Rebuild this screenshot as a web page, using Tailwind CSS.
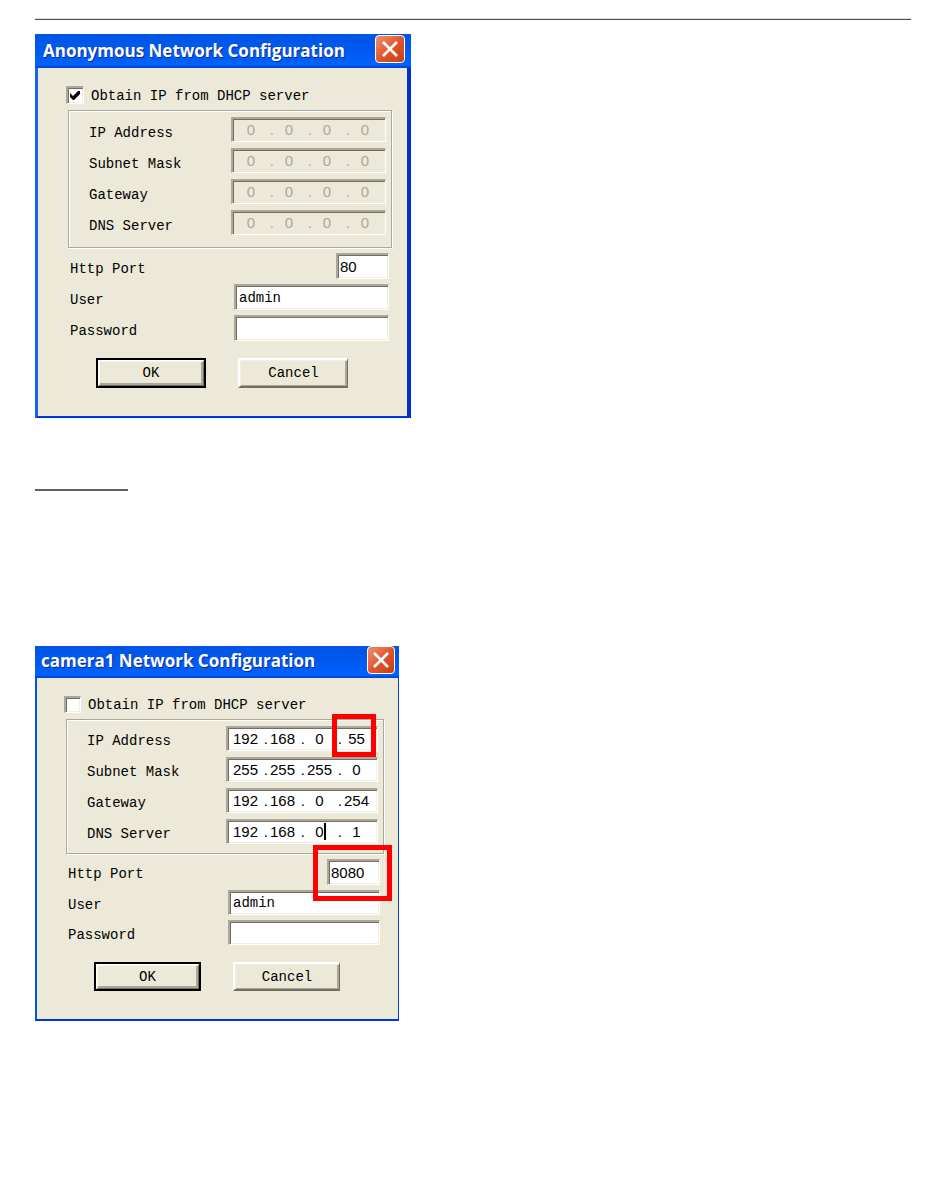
<!DOCTYPE html>
<html lang="en">

<head>
    <meta charset="UTF-8">
    <meta name="viewport" content="width=device-width, initial-scale=1.0">
    <title>Network Configuration</title>
    <script src="https://cdn.jsdelivr.net/npm/@tailwindcss/browser@4"></script>
</head>

<body class="min-h-screen bg-white text-black">
    <main class="px-[35px] pt-[18px] pb-40 font-['Liberation_Mono',monospace] text-sm leading-4">
        <hr class="mr-1 mb-3.5 h-0.5 border-t border-b border-t-[#dcdcdc] border-b-[#505050]">

        <!-- DHCP dialog -->
        <form class="w-[376px] border-r-4 border-b-2 border-l-3 border-r-[#0030c8] border-b-[#0038d8] border-l-[#1464f0] bg-[#ece9d8]">
            <div class="-mr-1 -ml-[3px] flex h-[34px] items-center justify-between bg-linear-to-b from-[#0054e3] via-[#0058ee] via-40% to-[#0064ff] pr-1.5 pl-2 shadow-[inset_0_-2px_0_#0048d8]">
                <h2 class="font-['Open_Sans',sans-serif] text-[17px] font-bold text-white [text-shadow:1px_1px_0_#0a2a9a]">Anonymous Network Configuration</h2>
                <button type="button" aria-label="Close" class="mb-1 flex h-7 w-[30px] items-center justify-center rounded border border-white bg-linear-to-br from-[#ec9070] via-[#e2562e] to-[#c83c10]">
                    <svg class="h-4 w-4" viewBox="0 0 16 16" fill="none" stroke="#fff" stroke-width="2.6"><path d="M1 1L15 15M15 1L1 15" /></svg>
                </button>
            </div>

            <div class="pt-[18px] pr-[15px] pb-7 pl-[30px]">
                <div class="-ml-0.5 flex items-center gap-[7px]">
                    <span class="grid h-[18px] w-[18px]">
                        <input id="dhcp1" type="checkbox" checked class="peer col-start-1 row-start-1 appearance-none border-t-2 border-r border-b border-l-2 border-t-[#aca899] border-r-white border-b-white border-l-[#aca899] bg-white shadow-[inset_1px_1px_0_#716f64,inset_-1px_-1px_0_#f1efe2]">
                        <svg class="pointer-events-none invisible col-start-1 row-start-1 h-[18px] w-[18px] peer-checked:visible" viewBox="0 0 18 18"><path d="M4 7L7 10L12 5H14V8L8 14H7L4 11Z" /></svg>
                    </span>
                    <label for="dhcp1" class="pt-0.5">Obtain IP from DHCP server</label>
                </div>

                <fieldset disabled class="mt-1.5 grid gap-1.5 border border-[#aca899] pt-1.5 pr-[5px] pb-3 pl-5 shadow-[1px_1px_0_#fff,inset_1px_1px_0_#fff]">
                    <div class="flex items-center justify-between">
                        <label for="ip1" class="pt-1.5">IP Address</label>
                        <div class="flex h-[25px] w-[155px] items-center border-t-2 border-r border-b border-l-2 border-t-[#aca899] border-r-white border-b-white border-l-[#aca899] pl-[3px] font-['Liberation_Sans',sans-serif] text-[15px] text-[#aca899] shadow-[inset_1px_1px_0_#716f64]">
                            <input id="ip1" value="0" class="w-[30px] text-center"><span class="w-2 text-right">.</span>
                            <input aria-label="IP octet 2" value="0" class="w-[30px] text-center"><span class="w-2 text-right">.</span>
                            <input aria-label="IP octet 3" value="0" class="w-[30px] text-center"><span class="w-2 text-right">.</span>
                            <input aria-label="IP octet 4" value="0" class="w-[30px] text-center">
                        </div>
                    </div>
                    <div class="flex items-center justify-between">
                        <label for="mask1" class="pt-1.5">Subnet Mask</label>
                        <div class="flex h-[25px] w-[155px] items-center border-t-2 border-r border-b border-l-2 border-t-[#aca899] border-r-white border-b-white border-l-[#aca899] pl-[3px] font-['Liberation_Sans',sans-serif] text-[15px] text-[#aca899] shadow-[inset_1px_1px_0_#716f64]">
                            <input id="mask1" value="0" class="w-[30px] text-center"><span class="w-2 text-right">.</span>
                            <input aria-label="Mask octet 2" value="0" class="w-[30px] text-center"><span class="w-2 text-right">.</span>
                            <input aria-label="Mask octet 3" value="0" class="w-[30px] text-center"><span class="w-2 text-right">.</span>
                            <input aria-label="Mask octet 4" value="0" class="w-[30px] text-center">
                        </div>
                    </div>
                    <div class="flex items-center justify-between">
                        <label for="gateway1" class="pt-1.5">Gateway</label>
                        <div class="flex h-[25px] w-[155px] items-center border-t-2 border-r border-b border-l-2 border-t-[#aca899] border-r-white border-b-white border-l-[#aca899] pl-[3px] font-['Liberation_Sans',sans-serif] text-[15px] text-[#aca899] shadow-[inset_1px_1px_0_#716f64]">
                            <input id="gateway1" value="0" class="w-[30px] text-center"><span class="w-2 text-right">.</span>
                            <input aria-label="Gateway octet 2" value="0" class="w-[30px] text-center"><span class="w-2 text-right">.</span>
                            <input aria-label="Gateway octet 3" value="0" class="w-[30px] text-center"><span class="w-2 text-right">.</span>
                            <input aria-label="Gateway octet 4" value="0" class="w-[30px] text-center">
                        </div>
                    </div>
                    <div class="flex items-center justify-between">
                        <label for="dns1" class="pt-1.5">DNS Server</label>
                        <div class="flex h-[25px] w-[155px] items-center border-t-2 border-r border-b border-l-2 border-t-[#aca899] border-r-white border-b-white border-l-[#aca899] pl-[3px] font-['Liberation_Sans',sans-serif] text-[15px] text-[#aca899] shadow-[inset_1px_1px_0_#716f64]">
                            <input id="dns1" value="0" class="w-[30px] text-center"><span class="w-2 text-right">.</span>
                            <input aria-label="DNS octet 2" value="0" class="w-[30px] text-center"><span class="w-2 text-right">.</span>
                            <input aria-label="DNS octet 3" value="0" class="w-[30px] text-center"><span class="w-2 text-right">.</span>
                            <input aria-label="DNS octet 4" value="0" class="w-[30px] text-center">
                        </div>
                    </div>
                </fieldset>

                <div class="mt-[5px] grid gap-[5px] pr-[3px] pl-0.5">
                    <div class="flex items-center justify-between">
                        <label for="port1" class="pt-1.5">Http Port</label>
                        <input id="port1" value="80" class="h-[26px] w-[53px] border-t-2 border-r border-b border-l-2 border-t-[#aca899] border-r-white border-b-white border-l-[#aca899] bg-white pl-0.5 font-['Liberation_Sans',sans-serif] text-[15px] shadow-[inset_1px_1px_0_#716f64,inset_-1px_-1px_0_#f1efe2]">
                    </div>
                    <div class="flex items-center justify-between">
                        <label for="user1" class="pt-1.5">User</label>
                        <input id="user1" value="admin" class="h-[26px] w-[155px] border-t-2 border-r border-b border-l-2 border-t-[#aca899] border-r-white border-b-white border-l-[#aca899] bg-white pl-[3px] shadow-[inset_1px_1px_0_#716f64,inset_-1px_-1px_0_#f1efe2]">
                    </div>
                    <div class="flex items-center justify-between">
                        <label for="password1" class="pt-1.5">Password</label>
                        <input id="password1" type="password" class="h-[26px] w-[155px] border-t-2 border-r border-b border-l-2 border-t-[#aca899] border-r-white border-b-white border-l-[#aca899] bg-white pl-[3px] shadow-[inset_1px_1px_0_#716f64,inset_-1px_-1px_0_#f1efe2]">
                    </div>
                </div>

                <div class="mt-[17px] flex gap-8 pl-7">
                    <button type="button" class="h-[30px] w-[110px] border-2 border-black shadow-[inset_1px_1px_0_#fff,inset_-1px_-1px_0_#716f64,inset_2px_2px_0_#f8f7f0,inset_-3px_-3px_0_#aca899]">OK</button>
                    <button type="button" class="h-[30px] w-[110px] border-t-2 border-r border-b-2 border-l-2 border-t-white border-r-[#716f64] border-b-[#716f64] border-l-white shadow-[inset_1px_1px_0_#f1efe2,inset_-2px_-1px_0_#aca899]">Cancel</button>
                </div>
            </div>
        </form>

        <hr class="mt-[71px] mb-[155px] w-[93px] border-t-2 border-[#606060]">

        <!-- Static address dialog -->
        <form class="w-[364px] border-r border-b-2 border-l-2 border-r-[#0038d8] border-b-[#0038d8] border-l-[#0054e3] bg-[#ece9d8]">
            <div class="-mr-px -ml-0.5 flex h-8 items-center justify-between bg-linear-to-b from-[#0054e3] via-[#0058ee] via-40% to-[#0064ff] pr-1 pb-0.5 pl-1.5 shadow-[inset_0_-2px_0_#0048d8]">
                <h2 class="font-['Open_Sans',sans-serif] text-[17px] font-bold text-white [text-shadow:1px_1px_0_#0a2a9a]">camera1 Network Configuration</h2>
                <button type="button" aria-label="Close" class="mb-0.5 flex h-7 w-7 items-center justify-center rounded border border-white bg-linear-to-br from-[#ec9070] via-[#e2562e] to-[#c83c10]">
                    <svg class="h-4 w-4" viewBox="0 0 16 16" fill="none" stroke="#fff" stroke-width="2.6"><path d="M1 1L15 15M15 1L1 15" /></svg>
                </button>
            </div>

            <div class="pt-[18px] pr-3.5 pb-7 pl-[29px]">
                <div class="-ml-0.5 flex items-center gap-[7px]">
                    <span class="grid h-[17px] w-[17px]">
                        <input id="dhcp2" type="checkbox" class="peer col-start-1 row-start-1 appearance-none border-t-2 border-r border-b border-l-2 border-t-[#aca899] border-r-white border-b-white border-l-[#aca899] bg-white shadow-[inset_1px_1px_0_#716f64,inset_-1px_-1px_0_#f1efe2]">
                        <svg class="pointer-events-none invisible col-start-1 row-start-1 h-[17px] w-[17px] peer-checked:visible" viewBox="0 0 18 18"><path d="M4 7L7 10L12 5H14V8L8 14H7L4 11Z" /></svg>
                    </span>
                    <label for="dhcp2">Obtain IP from DHCP server</label>
                </div>

                <fieldset class="mt-1.5 grid gap-1.5 border border-[#aca899] pt-1.5 pr-[5px] pb-[9px] pl-5 shadow-[1px_1px_0_#fff,inset_1px_1px_0_#fff]">
                    <div class="flex items-center justify-between">
                        <label for="ip2" class="pt-1">IP Address</label>
                        <div class="relative flex h-[25px] w-[152px] items-center border-t-2 border-r border-b border-l-2 border-t-[#aca899] border-r-white border-b-white border-l-[#aca899] bg-white pl-[3px] font-['Liberation_Sans',sans-serif] text-[15px] shadow-[inset_1px_1px_0_#716f64,inset_-1px_-1px_0_#f1efe2]">
                            <input id="ip2" value="192" class="w-[29px] text-center"><span class="w-2 text-right">.</span>
                            <input aria-label="IP octet 2" value="168" class="w-[29px] text-center"><span class="w-2 text-right">.</span>
                            <input aria-label="IP octet 3" value="0" class="w-[29px] text-center"><span class="w-2 text-right">.</span>
                            <input aria-label="IP octet 4" value="55" class="w-[29px] text-center">
                            <!-- callout -->
                            <div class="pointer-events-none absolute -top-3.5 right-px h-[43px] w-11 border-5 border-[#ff0000]"></div>
                        </div>
                    </div>
                    <div class="flex items-center justify-between">
                        <label for="mask2" class="pt-1">Subnet Mask</label>
                        <div class="flex h-[25px] w-[152px] items-center border-t-2 border-r border-b border-l-2 border-t-[#aca899] border-r-white border-b-white border-l-[#aca899] bg-white pl-[3px] font-['Liberation_Sans',sans-serif] text-[15px] shadow-[inset_1px_1px_0_#716f64,inset_-1px_-1px_0_#f1efe2]">
                            <input id="mask2" value="255" class="w-[29px] text-center"><span class="w-2 text-right">.</span>
                            <input aria-label="Mask octet 2" value="255" class="w-[29px] text-center"><span class="w-2 text-right">.</span>
                            <input aria-label="Mask octet 3" value="255" class="w-[29px] text-center"><span class="w-2 text-right">.</span>
                            <input aria-label="Mask octet 4" value="0" class="w-[29px] text-center">
                        </div>
                    </div>
                    <div class="flex items-center justify-between">
                        <label for="gateway2" class="pt-1">Gateway</label>
                        <div class="flex h-[25px] w-[152px] items-center border-t-2 border-r border-b border-l-2 border-t-[#aca899] border-r-white border-b-white border-l-[#aca899] bg-white pl-[3px] font-['Liberation_Sans',sans-serif] text-[15px] shadow-[inset_1px_1px_0_#716f64,inset_-1px_-1px_0_#f1efe2]">
                            <input id="gateway2" value="192" class="w-[29px] text-center"><span class="w-2 text-right">.</span>
                            <input aria-label="Gateway octet 2" value="168" class="w-[29px] text-center"><span class="w-2 text-right">.</span>
                            <input aria-label="Gateway octet 3" value="0" class="w-[29px] text-center"><span class="w-2 text-right">.</span>
                            <input aria-label="Gateway octet 4" value="254" class="w-[29px] text-center">
                        </div>
                    </div>
                    <div class="flex items-center justify-between">
                        <label for="dns2" class="pt-1">DNS Server</label>
                        <div class="relative flex h-[25px] w-[152px] items-center border-t-2 border-r border-b border-l-2 border-t-[#aca899] border-r-white border-b-white border-l-[#aca899] bg-white pl-[3px] font-['Liberation_Sans',sans-serif] text-[15px] shadow-[inset_1px_1px_0_#716f64,inset_-1px_-1px_0_#f1efe2]">
                            <input id="dns2" value="192" class="w-[29px] text-center"><span class="w-2 text-right">.</span>
                            <input aria-label="DNS octet 2" value="168" class="w-[29px] text-center"><span class="w-2 text-right">.</span>
                            <input aria-label="DNS octet 3" value="0" class="w-[29px] text-center"><span class="w-2 text-right">.</span>
                            <input aria-label="DNS octet 4" value="1" class="w-[29px] text-center">
                            <!-- text caret -->
                            <div class="pointer-events-none absolute top-0.5 left-24 h-[17px] w-0.5 bg-black"></div>
                        </div>
                    </div>
                </fieldset>

                <div class="mt-[5px] grid gap-[5px] pr-1 pl-0.5">
                    <div class="flex items-center justify-between">
                        <label for="port2" class="pt-1">Http Port</label>
                        <div class="relative">
                            <input id="port2" value="8080" class="block h-[26px] w-[53px] border-t-2 border-r border-b border-l-2 border-t-[#aca899] border-r-white border-b-white border-l-[#aca899] bg-white pl-0.5 font-['Liberation_Sans',sans-serif] text-[15px] shadow-[inset_1px_1px_0_#716f64,inset_-1px_-1px_0_#f1efe2]">
                            <!-- callout -->
                            <div class="pointer-events-none absolute -top-3.5 -right-3 z-10 h-14 w-[79px] border-5 border-[#ff0000]"></div>
                        </div>
                    </div>
                    <div class="flex items-center justify-between">
                        <label for="user2" class="pt-1">User</label>
                        <input id="user2" value="admin" class="h-[25px] w-[152px] border-t-2 border-r border-b border-l-2 border-t-[#aca899] border-r-white border-b-white border-l-[#aca899] bg-white pl-[3px] shadow-[inset_1px_1px_0_#716f64,inset_-1px_-1px_0_#f1efe2]">
                    </div>
                    <div class="flex items-center justify-between">
                        <label for="password2" class="pt-1">Password</label>
                        <input id="password2" type="password" class="h-[25px] w-[152px] border-t-2 border-r border-b border-l-2 border-t-[#aca899] border-r-white border-b-white border-l-[#aca899] bg-white pl-[3px] shadow-[inset_1px_1px_0_#716f64,inset_-1px_-1px_0_#f1efe2]">
                    </div>
                </div>

                <div class="mt-[17px] flex gap-8 pl-7">
                    <button type="button" class="h-[29px] w-[107px] border-2 border-black shadow-[inset_1px_1px_0_#fff,inset_-1px_-1px_0_#716f64,inset_2px_2px_0_#f8f7f0,inset_-3px_-3px_0_#aca899]">OK</button>
                    <button type="button" class="h-[29px] w-[107px] border-t-2 border-r border-b-2 border-l-2 border-t-white border-r-[#716f64] border-b-[#716f64] border-l-white shadow-[inset_1px_1px_0_#f1efe2,inset_-2px_-1px_0_#aca899]">Cancel</button>
                </div>
            </div>
        </form>
    </main>
</body>

</html>
